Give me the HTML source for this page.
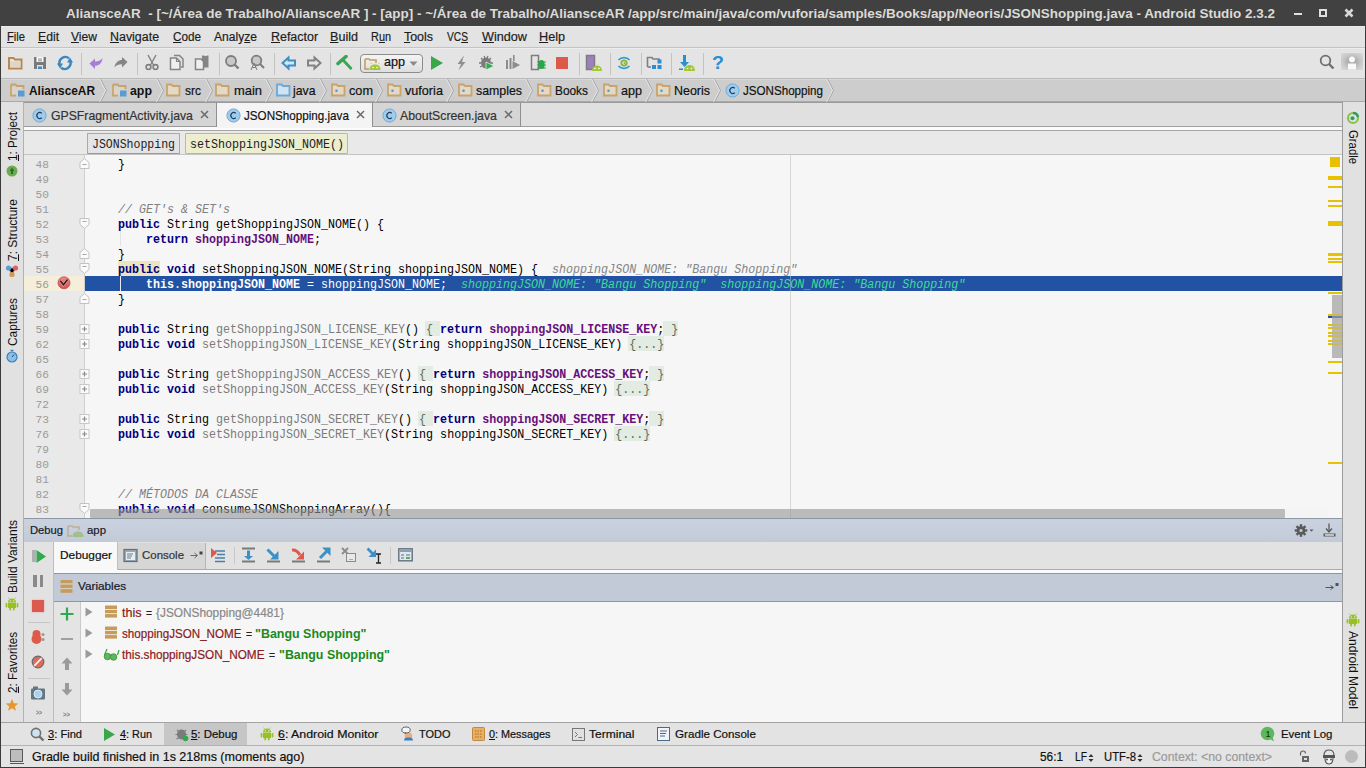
<!DOCTYPE html><html><head><meta charset="utf-8"><style>
html,body{margin:0;padding:0;width:1366px;height:768px;overflow:hidden;background:#e6e6e6}
body>div,body>svg{position:absolute;transform-origin:0 0;white-space:pre;margin:0;padding:0}
u{text-decoration:underline;text-underline-offset:1px}
.s{-webkit-text-stroke:0.2px currentColor}
</style></head><body>
<div style="left:0px;top:0px;width:1366px;height:26px;background:#414141;"></div>
<div style="left:0px;top:26px;width:1366px;height:21px;background:#e3e3e3;border-top:1px solid #ececec;box-sizing:border-box"></div>
<div style="left:0px;top:47px;width:1366px;height:1px;background:#c4c4c4;"></div>
<div style="left:0px;top:48px;width:1366px;height:30px;background:#e4e4e4;border-top:1px solid #ededed;box-sizing:border-box"></div>
<div style="left:0px;top:78px;width:1366px;height:1px;background:#b9b9b9;"></div>
<div style="left:0px;top:79px;width:1366px;height:23px;background:#cdcdcd;border-top:1px solid #d8d8d8;box-sizing:border-box"></div>
<div style="left:0px;top:101px;width:1366px;height:1px;background:#a9a9a9;"></div>
<div style="left:0px;top:102px;width:24px;height:620px;background:#e1e1e1;border-left:1px solid #505050;border-right:1px solid #b2b2b2;box-sizing:border-box"></div>
<div style="left:1342px;top:102px;width:24px;height:620px;background:#e1e1e1;border-left:1px solid #9c9c9c;border-right:1px solid #505050;box-sizing:border-box"></div>
<div style="left:24px;top:102px;width:1318px;height:25px;background:#e0e0e0;"></div>
<div style="left:24px;top:126px;width:1318px;height:1px;background:#9e9e9e;"></div>
<div style="left:24px;top:127px;width:1318px;height:3px;background:#fbfbfb;"></div>
<div style="left:24px;top:130px;width:1318px;height:1px;background:#a5a5a5;"></div>
<div style="left:24px;top:131px;width:1318px;height:23px;background:#e9e9e9;"></div>
<div style="left:24px;top:154px;width:1318px;height:1px;background:#c4c4c4;"></div>
<div style="left:24px;top:155px;width:1318px;height:363px;background:#f6f6f6;"></div>
<div style="left:24px;top:155px;width:61px;height:363px;background:#e9e9e9;"></div>
<div style="left:790px;top:155px;width:1px;height:363px;background:#d7d7d7;"></div>
<div style="left:24px;top:518px;width:1318px;height:25px;background:linear-gradient(#cbd2df,#c2cad8);border-top:1px solid #8f97a3;border-bottom:1px solid #8f97a3;box-sizing:border-box"></div>
<div style="left:24px;top:542px;width:30px;height:180px;background:#e2e2e2;border-right:1px solid #bdbdbd;box-sizing:border-box"></div>
<div style="left:54px;top:542px;width:1288px;height:28px;background:#e2e2e2;"></div>
<div style="left:54px;top:569px;width:1288px;height:1px;background:#b4a9a6;"></div>
<div style="left:54px;top:570px;width:1288px;height:3px;background:#fafafa;"></div>
<div style="left:54px;top:573px;width:1288px;height:29px;background:#c2cad8;border-top:1px solid #8e96a2;border-bottom:1px solid #8e96a2;box-sizing:border-box"></div>
<div style="left:54px;top:602px;width:27px;height:120px;background:#e4e4e4;border-right:1px solid #c9c9c9;box-sizing:border-box"></div>
<div style="left:81px;top:602px;width:1261px;height:120px;background:#f6f6f6;"></div>
<div style="left:0px;top:722px;width:1366px;height:24px;background:#e3e3e3;border-top:1px solid #a3a3a3;box-sizing:border-box"></div>
<div style="left:0px;top:745px;width:1366px;height:1px;background:#b2b2b2;"></div>
<div style="left:0px;top:746px;width:1366px;height:22px;background:#e4e4e4;border-bottom:1px solid #3b3b3b;border-left:1px solid #505050;box-sizing:border-box"></div>
<div style="left:81px;top:53px;width:1px;height:22px;background:#c2c2c2;"></div>
<div style="left:137px;top:53px;width:1px;height:22px;background:#c2c2c2;"></div>
<div style="left:219px;top:53px;width:1px;height:22px;background:#c2c2c2;"></div>
<div style="left:274px;top:53px;width:1px;height:22px;background:#c2c2c2;"></div>
<div style="left:330px;top:53px;width:1px;height:22px;background:#c2c2c2;"></div>
<div style="left:579px;top:53px;width:1px;height:22px;background:#c2c2c2;"></div>
<div style="left:641px;top:53px;width:1px;height:22px;background:#c2c2c2;"></div>
<div style="left:671px;top:53px;width:1px;height:22px;background:#c2c2c2;"></div>
<div style="left:703px;top:53px;width:1px;height:22px;background:#c2c2c2;"></div>
<svg style="left:7px;top:55px" width="16" height="16" viewBox="0 0 16 16"><path d="M2 3 H6.5 L8 4.5 H14.5 V13.5 H2 Z" fill="none" stroke="#b8884e" stroke-width="2"/><rect x="3" y="6.5" width="10.5" height="6" fill="#dcd6cc"/></svg>
<svg style="left:33px;top:55px" width="14" height="16" viewBox="0 0 14 16"><path d="M1 2 H13 V14 H1 Z" fill="#7a7a7a"/><rect x="3.5" y="2" width="7" height="5" fill="#fafafa"/><path d="M5 4H9M5 5.8H9" stroke="#7a7a7a" stroke-width="0.9"/><rect x="4" y="10" width="6" height="4" fill="#e0e0e0"/><rect x="5" y="11.5" width="4" height="2.5" fill="#3f8ac4"/></svg>
<svg style="left:57px;top:55px" width="16" height="16" viewBox="0 0 16 16"><path d="M12 3.2 A6 6 0 0 0 2.6 9.5" fill="none" stroke="#3b87c0" stroke-width="2.4"/><path d="M4 12.8 A6 6 0 0 0 13.4 6.5" fill="none" stroke="#3b87c0" stroke-width="2.4"/><path d="M0 8.5 H6 L3 13.5 Z" fill="#3b87c0"/><path d="M16 7.5 H10 L13 2.5 Z" fill="#3b87c0"/><path d="M8.5 0 V16" stroke="#e6e6e6" stroke-width="0"/></svg>
<svg style="left:88px;top:55px" width="16" height="16" viewBox="0 0 16 16"><path d="M1.5 8.5 L7 3.5 V6.5 C10.5 6.3 13.5 5 14.5 3 C14.2 8 11 10.8 7 10.8 V14 Z" fill="#a67fd4"/></svg>
<svg style="left:113px;top:55px" width="16" height="16" viewBox="0 0 16 16"><path d="M14.5 7 L9 2 V5 C5.5 5 2 7.5 1.5 12.5 C3 10 5.5 9.2 9 9.2 V12.5 Z" fill="#858585"/></svg>
<svg style="left:144px;top:54px" width="16" height="17" viewBox="0 0 16 17"><path d="M4 1 L9.5 11 M12 1 L6.5 11" stroke="#808080" stroke-width="1.4"/><circle cx="4.5" cy="13" r="2.4" fill="none" stroke="#808080" stroke-width="1.6"/><circle cx="11.5" cy="13" r="2.4" fill="none" stroke="#808080" stroke-width="1.6"/></svg>
<svg style="left:169px;top:54px" width="16" height="17" viewBox="0 0 16 17"><path d="M5 1.5 H10.5 L14 5 V13 H12" fill="none" stroke="#858585" stroke-width="1.5"/><path d="M1.5 4 H7.5 L11 7.5 V15.5 H1.5 Z" fill="#f0f0f0" stroke="#858585" stroke-width="1.5"/><path d="M7.5 4 V7.5 H11" fill="none" stroke="#858585" stroke-width="1.2"/></svg>
<svg style="left:194px;top:54px" width="16" height="17" viewBox="0 0 16 17"><rect x="8" y="1.5" width="6.5" height="12" fill="#858585"/><path d="M10 1 H13" stroke="#fafafa" stroke-width="1"/><path d="M1.5 5 H7 L9.5 7.5 V15.5 H1.5 Z" fill="#f0f0f0" stroke="#858585" stroke-width="1.5"/></svg>
<svg style="left:224px;top:54px" width="17" height="17" viewBox="0 0 17 17"><circle cx="7" cy="7" r="5" fill="#c8c8c8" stroke="#7d7d7d" stroke-width="1.8"/><path d="M10.5 10.5 L14.5 14.5" stroke="#7d7d7d" stroke-width="2.4"/></svg>
<svg style="left:249px;top:54px" width="17" height="17" viewBox="0 0 17 17"><circle cx="7.5" cy="6.5" r="4.8" fill="#c8c8c8" stroke="#7d7d7d" stroke-width="1.8"/><path d="M11 10 L15 14" stroke="#7d7d7d" stroke-width="2.2"/><path d="M2 16 L5 9 L8 16 M3.2 13.5H6.8" fill="none" stroke="#7d7d7d" stroke-width="1"/></svg>
<svg style="left:281px;top:55px" width="16" height="16" viewBox="0 0 16 16"><path d="M1.5 8 L7.5 2.5 V5.5 H14 V10.5 H7.5 V13.5 Z" fill="#d4e6f2" stroke="#3d8fc4" stroke-width="2"/></svg>
<svg style="left:306px;top:55px" width="16" height="16" viewBox="0 0 16 16"><path d="M14.5 8 L8.5 2.5 V5.5 H2 V10.5 H8.5 V13.5 Z" fill="#e6e6e6" stroke="#828282" stroke-width="2"/></svg>
<svg style="left:336px;top:55px" width="17" height="16" viewBox="0 0 17 16"><path d="M2 8.5 L10 1.5" stroke="#3aa655" stroke-width="3.6" stroke-linecap="round"/><path d="M7.5 5.5 L14.8 13.2" stroke="#3aa655" stroke-width="2.8" stroke-linecap="round"/></svg>
<div style="left:360px;top:54px;width:63px;height:19px;background:linear-gradient(#f4f4f4,#dedede);border:1px solid #8c8c8c;border-radius:4px;box-sizing:border-box"></div>
<svg style="left:364px;top:57px" width="18" height="14" viewBox="0 0 18 14"><path d="M1 2 H5 L6 3 H12 V6" fill="none" stroke="#c39a5c" stroke-width="1.5"/><path d="M1 2 V12 H5" fill="none" stroke="#c39a5c" stroke-width="1.5"/><path d="M5.5 13 C5.5 9 8 7.5 11 7.5 C14 7.5 16.5 9 16.5 13 Z" fill="#a4c639"/><circle cx="9" cy="10.5" r="0.8" fill="#fff"/><circle cx="13" cy="10.5" r="0.8" fill="#fff"/><path d="M7.5 7 L6.8 6 M14.5 7 L15.2 6" stroke="#a4c639" stroke-width="0.8"/></svg>
<div class="s" style="left:384.00px;top:55.20px;font:13.00px/14.60px 'Liberation Sans';color:#111;transform:scaleX(0.9677);">app</div>
<svg style="left:409px;top:61px" width="9" height="6" viewBox="0 0 9 6"><path d="M0.5 0.5 H8.5 L4.5 5 Z" fill="#8a8a8a"/></svg>
<svg style="left:430px;top:55px" width="14" height="16" viewBox="0 0 14 16"><path d="M1 1 L13 8 L1 15 Z" fill="#3aa84a"/></svg>
<svg style="left:455px;top:55px" width="12" height="16" viewBox="0 0 12 16"><path d="M9 0.5 L2.5 9 H6 L3.5 15.5 L10.5 7 H7 Z" fill="#8f8f8f"/></svg>
<svg style="left:478px;top:54px" width="18" height="17" viewBox="0 0 18 17"><ellipse cx="8" cy="9" rx="5" ry="5.5" fill="#7b7b7b"/><path d="M3 4 L5 6 M13 4 L11 6 M1 9 H3 M13 9 H15 M2 13 L4 12 M14 13 L12 12 M6 2 L7 4 M10 2 L9 4" stroke="#7b7b7b" stroke-width="1.3"/><path d="M8 8 L16 12 L8 16 Z" fill="#2cae4a" stroke="#e6e6e6" stroke-width="0.8"/></svg>
<svg style="left:505px;top:54px" width="16" height="17" viewBox="0 0 16 17"><rect x="1" y="6" width="2" height="9" fill="#8c8c8c"/><rect x="4.5" y="4" width="2" height="11" fill="#8c8c8c"/><rect x="8" y="1" width="1.6" height="6" fill="#8c8c8c"/><path d="M7.5 7 L15 11 L7.5 15 Z" fill="#8c8c8c"/></svg>
<svg style="left:530px;top:54px" width="16" height="17" viewBox="0 0 16 17"><rect x="1.5" y="1.5" width="7" height="14" fill="none" stroke="#7d7d7d" stroke-width="1.5"/><ellipse cx="11.5" cy="10.5" rx="3.2" ry="4.5" fill="#2aa64a"/><path d="M7 8 H16 M7 11 H16 M7 14 H16" stroke="#2aa64a" stroke-width="1"/></svg>
<div style="left:556px;top:57px;width:12px;height:12px;background:#dd5a4a;"></div>
<svg style="left:585px;top:54px" width="17" height="18" viewBox="0 0 17 18"><rect x="1.5" y="1.5" width="8" height="14" fill="#9e7fc0" stroke="#7d7d7d" stroke-width="1.5"/><path d="M7 17 C7 13 9.5 11.5 12 11.5 C14.5 11.5 17 13 17 17 Z" fill="#a4c639"/><circle cx="10" cy="14.5" r="0.8" fill="#fff"/><circle cx="14" cy="14.5" r="0.8" fill="#fff"/></svg>
<svg style="left:616px;top:55px" width="16" height="16" viewBox="0 0 16 16"><path d="M2.5 5 A7 6 0 0 1 13.5 5 M2.5 11 A7 6 0 0 0 13.5 11" fill="none" stroke="#2a9fd6" stroke-width="1.8"/><circle cx="8" cy="8" r="3.6" fill="#8bb33a"/><circle cx="8" cy="8" r="1.8" fill="#e6e6e6"/><circle cx="8.5" cy="8" r="1" fill="#8bb33a"/></svg>
<svg style="left:646px;top:55px" width="18" height="16" viewBox="0 0 18 16"><path d="M1.5 12 V2.5 H6 L7 4 H13 V6" fill="none" stroke="#7f7f7f" stroke-width="1.6"/><path d="M1.5 12 H5" stroke="#7f7f7f" stroke-width="1.6"/><rect x="6" y="10" width="4" height="4" fill="#2a8fd0"/><rect x="11.5" y="10" width="4" height="4" fill="#2a8fd0"/><rect x="11.5" y="4.5" width="4" height="4" fill="#2a8fd0"/></svg>
<svg style="left:678px;top:54px" width="18" height="17" viewBox="0 0 18 17"><rect x="5" y="1" width="3" height="8" fill="#2a8fd0"/><path d="M2 8 H11 L6.5 13 Z" fill="#2a8fd0"/><rect x="1" y="14.5" width="4" height="1.5" fill="#2a8fd0"/><path d="M6 17 C6 13 8.5 11 11.5 11 C14.5 11 17 13 17 17 Z" fill="#a4c639"/><circle cx="9.5" cy="14.5" r="0.8" fill="#fff"/><circle cx="13.5" cy="14.5" r="0.8" fill="#fff"/></svg>
<div style="left:712.00px;top:52.70px;font:bold 18.00px/20.20px 'Liberation Sans';color:#2a8fd0;transform:scaleX(1.0909);">?</div>
<svg style="left:1319px;top:54px" width="17" height="17" viewBox="0 0 17 17"><circle cx="6.5" cy="6.5" r="4.8" fill="none" stroke="#6f6f6f" stroke-width="1.8"/><path d="M10 10 L14.5 14.5" stroke="#6f6f6f" stroke-width="2.4"/></svg>
<div style="left:1341px;top:53px;width:22px;height:17px;background:radial-gradient(ellipse at center,#9a9a9a 0%,#c9c9c9 60%,#dcdcdc 100%);"></div>
<svg style="left:1346px;top:55px" width="12" height="15" viewBox="0 0 12 15"><circle cx="6" cy="4.5" r="3" fill="#fafafa"/><rect x="2" y="8.5" width="8" height="6" fill="#fafafa"/></svg>
<div style="left:610px;top:53px;width:1px;height:22px;background:#c2c2c2;"></div>
<svg style="left:10px;top:83px" width="16" height="14" viewBox="0 0 16 14"><path d="M1 1.5 H5.5 L7 3 H13.5 V6 M1 1.5 V12.5 H6" fill="none" stroke="#c9a46a" stroke-width="1.8"/><rect x="1.8" y="4" width="10.5" height="7.5" fill="#e2d7c3" opacity="0.6"/><rect x="8" y="7.5" width="6.5" height="6" fill="#5b9bd1"/></svg>
<svg style="left:99px;top:79px" width="9" height="23" viewBox="0 0 9 23"><path d="M1.5 0 L7.5 11.5 L1.5 23" fill="none" stroke="#a3a3a3" stroke-width="1"/><path d="M0.5 0 L6.5 11.5 L0.5 23" fill="none" stroke="#ececec" stroke-width="0.8"/></svg>
<svg style="left:112px;top:83px" width="16" height="14" viewBox="0 0 16 14"><path d="M1 1.5 H5.5 L7 3 H13.5 V6 M1 1.5 V12.5 H6" fill="none" stroke="#c9a46a" stroke-width="1.8"/><rect x="1.8" y="4" width="10.5" height="7.5" fill="#e2d7c3" opacity="0.6"/><rect x="8" y="7.5" width="6.5" height="6" fill="#5b9bd1"/></svg>
<svg style="left:156px;top:79px" width="9" height="23" viewBox="0 0 9 23"><path d="M1.5 0 L7.5 11.5 L1.5 23" fill="none" stroke="#a3a3a3" stroke-width="1"/><path d="M0.5 0 L6.5 11.5 L0.5 23" fill="none" stroke="#ececec" stroke-width="0.8"/></svg>
<svg style="left:166px;top:83px" width="15" height="14" viewBox="0 0 15 14"><path d="M1 1.5 H5.5 L7 3 H13.5 V12.5 H1 Z" fill="#e3d9c6" stroke="#c9a46a" stroke-width="1.8"/></svg>
<svg style="left:205px;top:79px" width="9" height="23" viewBox="0 0 9 23"><path d="M1.5 0 L7.5 11.5 L1.5 23" fill="none" stroke="#a3a3a3" stroke-width="1"/><path d="M0.5 0 L6.5 11.5 L0.5 23" fill="none" stroke="#ececec" stroke-width="0.8"/></svg>
<svg style="left:215px;top:83px" width="15" height="14" viewBox="0 0 15 14"><path d="M1 1.5 H5.5 L7 3 H13.5 V12.5 H1 Z" fill="#e3d9c6" stroke="#c9a46a" stroke-width="1.8"/></svg>
<svg style="left:265px;top:79px" width="9" height="23" viewBox="0 0 9 23"><path d="M1.5 0 L7.5 11.5 L1.5 23" fill="none" stroke="#a3a3a3" stroke-width="1"/><path d="M0.5 0 L6.5 11.5 L0.5 23" fill="none" stroke="#ececec" stroke-width="0.8"/></svg>
<svg style="left:276px;top:83px" width="15" height="14" viewBox="0 0 15 14"><path d="M1 1.5 H5.5 L7 3 H13.5 V12.5 H1 Z" fill="#cfe3f2" stroke="#6aa9d8" stroke-width="1.8"/></svg>
<svg style="left:319px;top:79px" width="9" height="23" viewBox="0 0 9 23"><path d="M1.5 0 L7.5 11.5 L1.5 23" fill="none" stroke="#a3a3a3" stroke-width="1"/><path d="M0.5 0 L6.5 11.5 L0.5 23" fill="none" stroke="#ececec" stroke-width="0.8"/></svg>
<svg style="left:331px;top:83px" width="15" height="14" viewBox="0 0 15 14"><path d="M1 1.5 H5.5 L7 3 H13.5 V12.5 H1 Z" fill="#e3d9c6" stroke="#c9a46a" stroke-width="1.8"/><circle cx="5.5" cy="7.8" r="1.3" fill="#4e9ad0"/></svg>
<svg style="left:375px;top:79px" width="9" height="23" viewBox="0 0 9 23"><path d="M1.5 0 L7.5 11.5 L1.5 23" fill="none" stroke="#a3a3a3" stroke-width="1"/><path d="M0.5 0 L6.5 11.5 L0.5 23" fill="none" stroke="#ececec" stroke-width="0.8"/></svg>
<svg style="left:387px;top:83px" width="15" height="14" viewBox="0 0 15 14"><path d="M1 1.5 H5.5 L7 3 H13.5 V12.5 H1 Z" fill="#e3d9c6" stroke="#c9a46a" stroke-width="1.8"/><circle cx="5.5" cy="7.8" r="1.3" fill="#4e9ad0"/></svg>
<svg style="left:446px;top:79px" width="9" height="23" viewBox="0 0 9 23"><path d="M1.5 0 L7.5 11.5 L1.5 23" fill="none" stroke="#a3a3a3" stroke-width="1"/><path d="M0.5 0 L6.5 11.5 L0.5 23" fill="none" stroke="#ececec" stroke-width="0.8"/></svg>
<svg style="left:458px;top:83px" width="15" height="14" viewBox="0 0 15 14"><path d="M1 1.5 H5.5 L7 3 H13.5 V12.5 H1 Z" fill="#e3d9c6" stroke="#c9a46a" stroke-width="1.8"/><circle cx="5.5" cy="7.8" r="1.3" fill="#4e9ad0"/></svg>
<svg style="left:525px;top:79px" width="9" height="23" viewBox="0 0 9 23"><path d="M1.5 0 L7.5 11.5 L1.5 23" fill="none" stroke="#a3a3a3" stroke-width="1"/><path d="M0.5 0 L6.5 11.5 L0.5 23" fill="none" stroke="#ececec" stroke-width="0.8"/></svg>
<svg style="left:537px;top:83px" width="15" height="14" viewBox="0 0 15 14"><path d="M1 1.5 H5.5 L7 3 H13.5 V12.5 H1 Z" fill="#e3d9c6" stroke="#c9a46a" stroke-width="1.8"/><circle cx="5.5" cy="7.8" r="1.3" fill="#4e9ad0"/></svg>
<svg style="left:591px;top:79px" width="9" height="23" viewBox="0 0 9 23"><path d="M1.5 0 L7.5 11.5 L1.5 23" fill="none" stroke="#a3a3a3" stroke-width="1"/><path d="M0.5 0 L6.5 11.5 L0.5 23" fill="none" stroke="#ececec" stroke-width="0.8"/></svg>
<svg style="left:603px;top:83px" width="15" height="14" viewBox="0 0 15 14"><path d="M1 1.5 H5.5 L7 3 H13.5 V12.5 H1 Z" fill="#e3d9c6" stroke="#c9a46a" stroke-width="1.8"/><circle cx="5.5" cy="7.8" r="1.3" fill="#4e9ad0"/></svg>
<svg style="left:645px;top:79px" width="9" height="23" viewBox="0 0 9 23"><path d="M1.5 0 L7.5 11.5 L1.5 23" fill="none" stroke="#a3a3a3" stroke-width="1"/><path d="M0.5 0 L6.5 11.5 L0.5 23" fill="none" stroke="#ececec" stroke-width="0.8"/></svg>
<svg style="left:656px;top:83px" width="15" height="14" viewBox="0 0 15 14"><path d="M1 1.5 H5.5 L7 3 H13.5 V12.5 H1 Z" fill="#e3d9c6" stroke="#c9a46a" stroke-width="1.8"/><circle cx="5.5" cy="7.8" r="1.3" fill="#4e9ad0"/></svg>
<svg style="left:713px;top:79px" width="9" height="23" viewBox="0 0 9 23"><path d="M1.5 0 L7.5 11.5 L1.5 23" fill="none" stroke="#a3a3a3" stroke-width="1"/><path d="M0.5 0 L6.5 11.5 L0.5 23" fill="none" stroke="#ececec" stroke-width="0.8"/></svg>
<svg style="left:725px;top:83px" width="15" height="15" viewBox="0 0 15 15"><circle cx="7.5" cy="7.5" r="6.6" fill="#9fcbed" stroke="#6aaede" stroke-width="1"/><path d="M9.8 5.2 A3 3 0 1 0 9.8 9.8" fill="none" stroke="#1f3f60" stroke-width="1.2"/></svg>
<svg style="left:826px;top:79px" width="9" height="23" viewBox="0 0 9 23"><path d="M1.5 0 L7.5 11.5 L1.5 23" fill="none" stroke="#a3a3a3" stroke-width="1"/><path d="M0.5 0 L6.5 11.5 L0.5 23" fill="none" stroke="#ececec" stroke-width="0.8"/></svg>
<div style="left:24px;top:102px;width:193px;height:25px;background:#d5d5d5;border-right:1px solid #8e8e8e;border-bottom:1px solid #9a9a9a;box-sizing:border-box"></div>
<div style="left:217px;top:102px;width:155px;height:26px;background:#f4f4f4;"></div>
<div style="left:372px;top:102px;width:149px;height:25px;background:#d5d5d5;border-left:1px solid #8e8e8e;border-right:1px solid #8e8e8e;border-bottom:1px solid #9a9a9a;box-sizing:border-box"></div>
<div style="left:24px;top:102px;width:1318px;height:1px;background:#9a9a9a;"></div>
<svg style="left:32px;top:108px" width="15" height="15" viewBox="0 0 15 15"><circle cx="7.5" cy="7.5" r="6.6" fill="#9fcbed" stroke="#6aaede" stroke-width="1"/><path d="M9.8 5.2 A3 3 0 1 0 9.8 9.8" fill="none" stroke="#1f3f60" stroke-width="1.2"/></svg>
<svg style="left:226px;top:108px" width="15" height="15" viewBox="0 0 15 15"><circle cx="7.5" cy="7.5" r="6.6" fill="#9fcbed" stroke="#6aaede" stroke-width="1"/><path d="M9.8 5.2 A3 3 0 1 0 9.8 9.8" fill="none" stroke="#1f3f60" stroke-width="1.2"/></svg>
<svg style="left:382px;top:108px" width="15" height="15" viewBox="0 0 15 15"><circle cx="7.5" cy="7.5" r="6.6" fill="#9fcbed" stroke="#6aaede" stroke-width="1"/><path d="M9.8 5.2 A3 3 0 1 0 9.8 9.8" fill="none" stroke="#1f3f60" stroke-width="1.2"/></svg>
<svg style="left:200px;top:110px" width="9" height="9" viewBox="0 0 9 9"><path d="M1 1 L8 8 M8 1 L1 8" stroke="#6a6a6a" stroke-width="1.5"/></svg>
<svg style="left:356px;top:110px" width="9" height="9" viewBox="0 0 9 9"><path d="M1 1 L8 8 M8 1 L1 8" stroke="#6a6a6a" stroke-width="1.5"/></svg>
<svg style="left:504px;top:110px" width="9" height="9" viewBox="0 0 9 9"><path d="M1 1 L8 8 M8 1 L1 8" stroke="#6a6a6a" stroke-width="1.5"/></svg>
<div style="left:87px;top:133px;width:93px;height:21px;background:#e4e4e4;border:1px solid #a9a9a9;border-bottom-color:#9a9a9a;box-sizing:border-box;border-radius:1px"></div>
<div style="left:185px;top:133px;width:163px;height:21px;background:#ededd0;border:1px solid #b9b9a0;box-sizing:border-box;border-radius:1px"></div>
<div style="left:66.00px;top:6.60px;font:bold 12.50px/14.10px 'Liberation Sans';color:#dcdad5;transform:scaleX(1.0761);">AliansceAR  - [~/Área de Trabalho/AliansceAR ] - [app] - ~/Área de Trabalho/AliansceAR /app/src/main/java/com/vuforia/samples/Books/app/Neoris/JSONShopping.java - Android Studio 2.3.2</div>
<div style="left:1294px;top:13px;width:8px;height:2px;background:#e0e0e0;"></div>
<div style="left:1319px;top:9px;width:8px;height:8px;border:2px solid #e0e0e0;box-sizing:border-box"></div>
<svg style="left:1344px;top:8px" width="10" height="10" viewBox="0 0 10 10"><path d="M1.5 1.5L8.5 8.5M8.5 1.5L1.5 8.5" stroke="#d8d8d8" stroke-width="2.6"/></svg>
<div class="s" style="left:7.00px;top:29.60px;font:12.50px/14.10px 'Liberation Sans';color:#1d1d1d;transform:scaleX(0.8955);"><u>F</u>ile</div>
<div class="s" style="left:38.00px;top:29.60px;font:12.50px/14.10px 'Liberation Sans';color:#1d1d1d;transform:scaleX(0.9767);"><u>E</u>dit</div>
<div class="s" style="left:71.00px;top:29.60px;font:12.50px/14.10px 'Liberation Sans';color:#1d1d1d;transform:scaleX(0.9665);"><u>V</u>iew</div>
<div class="s" style="left:110.00px;top:29.60px;font:12.50px/14.10px 'Liberation Sans';color:#1d1d1d;transform:scaleX(0.9939);"><u>N</u>avigate</div>
<div class="s" style="left:173.00px;top:29.60px;font:12.50px/14.10px 'Liberation Sans';color:#1d1d1d;transform:scaleX(0.9365);"><u>C</u>ode</div>
<div class="s" style="left:214.00px;top:29.60px;font:12.50px/14.10px 'Liberation Sans';color:#1d1d1d;transform:scaleX(0.9663);">Analy<u>z</u>e</div>
<div class="s" style="left:271.00px;top:29.60px;font:12.50px/14.10px 'Liberation Sans';color:#1d1d1d;transform:scaleX(0.9958);"><u>R</u>efactor</div>
<div class="s" style="left:330.00px;top:29.60px;font:12.50px/14.10px 'Liberation Sans';color:#1d1d1d;transform:scaleX(1.0072);"><u>B</u>uild</div>
<div class="s" style="left:371.00px;top:29.60px;font:12.50px/14.10px 'Liberation Sans';color:#1d1d1d;transform:scaleX(0.8734);">R<u>u</u>n</div>
<div class="s" style="left:404.00px;top:29.60px;font:12.50px/14.10px 'Liberation Sans';color:#1d1d1d;transform:scaleX(0.9932);"><u>T</u>ools</div>
<div class="s" style="left:447.00px;top:29.60px;font:12.50px/14.10px 'Liberation Sans';color:#1d1d1d;transform:scaleX(0.8171);">VC<u>S</u></div>
<div class="s" style="left:482.00px;top:29.60px;font:12.50px/14.10px 'Liberation Sans';color:#1d1d1d;transform:scaleX(1.0112);"><u>W</u>indow</div>
<div class="s" style="left:539.00px;top:29.60px;font:12.50px/14.10px 'Liberation Sans';color:#1d1d1d;transform:scaleX(1.0117);"><u>H</u>elp</div>
<div style="left:29.00px;top:83.90px;font:bold 12.80px/14.40px 'Liberation Sans';color:#111;transform:scaleX(0.9283);">AliansceAR</div>
<div style="left:130.00px;top:83.90px;font:bold 12.80px/14.40px 'Liberation Sans';color:#111;transform:scaleX(0.9649);">app</div>
<div class="s" style="left:185.00px;top:83.90px;font:12.80px/14.40px 'Liberation Sans';color:#111;transform:scaleX(0.9357);">src</div>
<div class="s" style="left:234.00px;top:83.90px;font:12.80px/14.40px 'Liberation Sans';color:#111;transform:scaleX(1.0108);">main</div>
<div class="s" style="left:293.38px;top:83.90px;font:12.80px/14.40px 'Liberation Sans';color:#111;transform:scaleX(0.9583);">java</div>
<div class="s" style="left:349.00px;top:83.90px;font:12.80px/14.40px 'Liberation Sans';color:#111;transform:scaleX(0.9917);">com</div>
<div class="s" style="left:405.00px;top:83.90px;font:12.80px/14.40px 'Liberation Sans';color:#111;transform:scaleX(0.9870);">vuforia</div>
<div class="s" style="left:476.00px;top:83.90px;font:12.80px/14.40px 'Liberation Sans';color:#111;transform:scaleX(0.9644);">samples</div>
<div class="s" style="left:555.00px;top:83.90px;font:12.80px/14.40px 'Liberation Sans';color:#111;transform:scaleX(0.9270);">Books</div>
<div class="s" style="left:621.00px;top:83.90px;font:12.80px/14.40px 'Liberation Sans';color:#111;transform:scaleX(0.9813);">app</div>
<div class="s" style="left:674.00px;top:83.90px;font:12.80px/14.40px 'Liberation Sans';color:#111;transform:scaleX(0.9730);">Neoris</div>
<div class="s" style="left:743.00px;top:83.90px;font:12.80px/14.40px 'Liberation Sans';color:#111;transform:scaleX(0.9070);">JSONShopping</div>
<div class="s" style="left:51.00px;top:109.40px;font:12.80px/14.40px 'Liberation Sans';color:#333;transform:scaleX(0.9562);">GPSFragmentActivity.java</div>
<div class="s" style="left:244.00px;top:109.40px;font:12.80px/14.40px 'Liberation Sans';color:#111;transform:scaleX(0.9099);">JSONShopping.java</div>
<div class="s" style="left:400.00px;top:109.40px;font:12.80px/14.40px 'Liberation Sans';color:#333;transform:scaleX(0.9594);">AboutScreen.java</div>
<div style="left:91.50px;top:137.50px;font:12.50px/14.30px 'Liberation Mono';color:#222;transform:scaleX(0.9222);">JSONShopping</div>
<div style="left:190.00px;top:137.50px;font:12.50px/14.30px 'Liberation Mono';color:#222;transform:scaleX(0.9333);">setShoppingJSON_NOME()</div>
<div style="left:85px;top:276px;width:1257px;height:15px;background:#2252a3;"></div>
<div style="left:24px;top:276px;width:61px;height:15px;background:#f5eedb;"></div>
<div style="left:790px;top:276px;width:1px;height:15px;background:#6f8fc6;"></div>
<div style="left:118.0px;top:261px;width:42px;height:15px;background:#ede3bd;"></div>
<div style="left:425.0px;top:321px;width:15.0px;height:15px;background:#e2ece2;"></div>
<div style="left:663.0px;top:321px;width:15.0px;height:15px;background:#e2ece2;"></div>
<div style="left:628.0px;top:336px;width:36.0px;height:15px;background:#e2ece2;"></div>
<div style="left:418.0px;top:366px;width:15.0px;height:15px;background:#e2ece2;"></div>
<div style="left:649.0px;top:366px;width:15.0px;height:15px;background:#e2ece2;"></div>
<div style="left:614.0px;top:381px;width:36.0px;height:15px;background:#e2ece2;"></div>
<div style="left:418.0px;top:411px;width:15.0px;height:15px;background:#e2ece2;"></div>
<div style="left:649.0px;top:411px;width:15.0px;height:15px;background:#e2ece2;"></div>
<div style="left:614.0px;top:426px;width:36.0px;height:15px;background:#e2ece2;"></div>
<div style="left:90px;top:157.50px;font:12.5px/14.30px 'Liberation Mono';color:#000;transform:scaleX(0.93333)">    }</div>
<div style="left:90px;top:202.50px;font:12.5px/14.30px 'Liberation Mono';color:#000;transform:scaleX(0.93333)"><span style="color:#808080;font-style:italic">    // GET&#x27;s &amp; SET&#x27;s</span></div>
<div style="left:90px;top:217.50px;font:12.5px/14.30px 'Liberation Mono';color:#000;transform:scaleX(0.93333)">    <span style="color:#000080;font-weight:bold">public</span> String getShoppingJSON_NOME() {</div>
<div style="left:90px;top:232.50px;font:12.5px/14.30px 'Liberation Mono';color:#000;transform:scaleX(0.93333)">        <span style="color:#000080;font-weight:bold">return</span> <span style="color:#660e7a;font-weight:bold">shoppingJSON_NOME</span>;</div>
<div style="left:90px;top:247.50px;font:12.5px/14.30px 'Liberation Mono';color:#000;transform:scaleX(0.93333)">    }</div>
<div style="left:90px;top:262.50px;font:12.5px/14.30px 'Liberation Mono';color:#000;transform:scaleX(0.93333)">    <span style="color:#000080;font-weight:bold">public</span> <span style="color:#000080;font-weight:bold">void</span> setShoppingJSON_NOME(String shoppingJSON_NOME) {  <span style="color:#858585;font-style:italic">shoppingJSON_NOME: &quot;Bangu Shopping&quot;</span></div>
<div style="left:90px;top:292.50px;font:12.5px/14.30px 'Liberation Mono';color:#000;transform:scaleX(0.93333)">    }</div>
<div style="left:90px;top:322.50px;font:12.5px/14.30px 'Liberation Mono';color:#000;transform:scaleX(0.93333)">    <span style="color:#000080;font-weight:bold">public</span> String <span style="color:#7b7b7b">getShoppingJSON_LICENSE_KEY</span>() <span style="color:#5f6a5f">{ </span><span style="color:#000080;font-weight:bold">return</span> <span style="color:#660e7a;font-weight:bold">shoppingJSON_LICENSE_KEY</span>;<span style="color:#5f6a5f"> }</span></div>
<div style="left:90px;top:337.50px;font:12.5px/14.30px 'Liberation Mono';color:#000;transform:scaleX(0.93333)">    <span style="color:#000080;font-weight:bold">public</span> <span style="color:#000080;font-weight:bold">void</span> <span style="color:#7b7b7b">setShoppingJSON_LICENSE_KEY</span>(String shoppingJSON_LICENSE_KEY) <span style="color:#5f6a5f">{...}</span></div>
<div style="left:90px;top:367.50px;font:12.5px/14.30px 'Liberation Mono';color:#000;transform:scaleX(0.93333)">    <span style="color:#000080;font-weight:bold">public</span> String <span style="color:#7b7b7b">getShoppingJSON_ACCESS_KEY</span>() <span style="color:#5f6a5f">{ </span><span style="color:#000080;font-weight:bold">return</span> <span style="color:#660e7a;font-weight:bold">shoppingJSON_ACCESS_KEY</span>;<span style="color:#5f6a5f"> }</span></div>
<div style="left:90px;top:382.50px;font:12.5px/14.30px 'Liberation Mono';color:#000;transform:scaleX(0.93333)">    <span style="color:#000080;font-weight:bold">public</span> <span style="color:#000080;font-weight:bold">void</span> <span style="color:#7b7b7b">setShoppingJSON_ACCESS_KEY</span>(String shoppingJSON_ACCESS_KEY) <span style="color:#5f6a5f">{...}</span></div>
<div style="left:90px;top:412.50px;font:12.5px/14.30px 'Liberation Mono';color:#000;transform:scaleX(0.93333)">    <span style="color:#000080;font-weight:bold">public</span> String <span style="color:#7b7b7b">getShoppingJSON_SECRET_KEY</span>() <span style="color:#5f6a5f">{ </span><span style="color:#000080;font-weight:bold">return</span> <span style="color:#660e7a;font-weight:bold">shoppingJSON_SECRET_KEY</span>;<span style="color:#5f6a5f"> }</span></div>
<div style="left:90px;top:427.50px;font:12.5px/14.30px 'Liberation Mono';color:#000;transform:scaleX(0.93333)">    <span style="color:#000080;font-weight:bold">public</span> <span style="color:#000080;font-weight:bold">void</span> <span style="color:#7b7b7b">setShoppingJSON_SECRET_KEY</span>(String shoppingJSON_SECRET_KEY) <span style="color:#5f6a5f">{...}</span></div>
<div style="left:90px;top:487.50px;font:12.5px/14.30px 'Liberation Mono';color:#000;transform:scaleX(0.93333)"><span style="color:#808080;font-style:italic">    // MÉTODOS DA CLASSE</span></div>
<div style="left:90px;top:502.50px;font:12.5px/14.30px 'Liberation Mono';color:#000;transform:scaleX(0.93333)">    <span style="color:#000080;font-weight:bold">public</span> <span style="color:#000080;font-weight:bold">void</span> consumeJSONShoppingArray(){</div>
<div style="left:90px;top:277.50px;font:12.5px/14.30px 'Liberation Mono';color:#ffffff;transform:scaleX(0.93333)">        <span style="font-weight:bold">this</span>.<span style="font-weight:bold">shoppingJSON_NOME</span> = shoppingJSON_NOME;  <span style="color:#3ddc97;font-style:italic">shoppingJSON_NOME: &quot;Bangu Shopping&quot;</span>  <span style="color:#3ddc97;font-style:italic">shoppingJSON_NOME: &quot;Bangu Shopping&quot;</span></div>
<div style="left:35.60px;top:158.90px;font:11.20px/12.80px 'Liberation Mono';color:#9a9a9a;transform:scaleX(1.0000);">48</div>
<div style="left:35.60px;top:173.90px;font:11.20px/12.80px 'Liberation Mono';color:#9a9a9a;transform:scaleX(1.0000);">49</div>
<div style="left:35.60px;top:188.90px;font:11.20px/12.80px 'Liberation Mono';color:#9a9a9a;transform:scaleX(1.0000);">50</div>
<div style="left:35.60px;top:203.90px;font:11.20px/12.80px 'Liberation Mono';color:#9a9a9a;transform:scaleX(1.0000);">51</div>
<div style="left:35.60px;top:218.90px;font:11.20px/12.80px 'Liberation Mono';color:#9a9a9a;transform:scaleX(1.0000);">52</div>
<div style="left:35.60px;top:233.90px;font:11.20px/12.80px 'Liberation Mono';color:#9a9a9a;transform:scaleX(1.0000);">53</div>
<div style="left:35.60px;top:248.90px;font:11.20px/12.80px 'Liberation Mono';color:#9a9a9a;transform:scaleX(1.0000);">54</div>
<div style="left:35.60px;top:263.90px;font:11.20px/12.80px 'Liberation Mono';color:#9a9a9a;transform:scaleX(1.0000);">55</div>
<div style="left:35.60px;top:278.90px;font:11.20px/12.80px 'Liberation Mono';color:#9a9a9a;transform:scaleX(1.0000);">56</div>
<div style="left:35.60px;top:293.90px;font:11.20px/12.80px 'Liberation Mono';color:#9a9a9a;transform:scaleX(1.0000);">57</div>
<div style="left:35.60px;top:308.90px;font:11.20px/12.80px 'Liberation Mono';color:#9a9a9a;transform:scaleX(1.0000);">58</div>
<div style="left:35.60px;top:323.90px;font:11.20px/12.80px 'Liberation Mono';color:#9a9a9a;transform:scaleX(1.0000);">59</div>
<div style="left:35.60px;top:338.90px;font:11.20px/12.80px 'Liberation Mono';color:#9a9a9a;transform:scaleX(1.0000);">62</div>
<div style="left:35.60px;top:353.90px;font:11.20px/12.80px 'Liberation Mono';color:#9a9a9a;transform:scaleX(1.0000);">65</div>
<div style="left:35.60px;top:368.90px;font:11.20px/12.80px 'Liberation Mono';color:#9a9a9a;transform:scaleX(1.0000);">66</div>
<div style="left:35.60px;top:383.90px;font:11.20px/12.80px 'Liberation Mono';color:#9a9a9a;transform:scaleX(1.0000);">69</div>
<div style="left:35.60px;top:398.90px;font:11.20px/12.80px 'Liberation Mono';color:#9a9a9a;transform:scaleX(1.0000);">72</div>
<div style="left:35.60px;top:413.90px;font:11.20px/12.80px 'Liberation Mono';color:#9a9a9a;transform:scaleX(1.0000);">73</div>
<div style="left:35.60px;top:428.90px;font:11.20px/12.80px 'Liberation Mono';color:#9a9a9a;transform:scaleX(1.0000);">76</div>
<div style="left:35.60px;top:443.90px;font:11.20px/12.80px 'Liberation Mono';color:#9a9a9a;transform:scaleX(1.0000);">79</div>
<div style="left:35.60px;top:458.90px;font:11.20px/12.80px 'Liberation Mono';color:#9a9a9a;transform:scaleX(1.0000);">80</div>
<div style="left:35.60px;top:473.90px;font:11.20px/12.80px 'Liberation Mono';color:#9a9a9a;transform:scaleX(1.0000);">81</div>
<div style="left:35.60px;top:488.90px;font:11.20px/12.80px 'Liberation Mono';color:#9a9a9a;transform:scaleX(1.0000);">82</div>
<div style="left:35.60px;top:503.90px;font:11.20px/12.80px 'Liberation Mono';color:#9a9a9a;transform:scaleX(1.0000);">83</div>
<div style="left:84px;top:155px;width:1px;height:363px;background:#cfcfcf;"></div>
<svg style="left:79px;top:158px" width="11" height="11" viewBox="0 0 11 11"><path d="M5.5 0.5 L10 4.5 V10.5 H1 V4.5 Z" fill="#fafafa" stroke="#c3c3c3" stroke-width="1"/><path d="M3.5 6.5H7.5" stroke="#a8a8a8" stroke-width="1"/></svg>
<svg style="left:79px;top:248px" width="11" height="11" viewBox="0 0 11 11"><path d="M5.5 0.5 L10 4.5 V10.5 H1 V4.5 Z" fill="#fafafa" stroke="#c3c3c3" stroke-width="1"/><path d="M3.5 6.5H7.5" stroke="#a8a8a8" stroke-width="1"/></svg>
<svg style="left:79px;top:293px" width="11" height="11" viewBox="0 0 11 11"><path d="M5.5 0.5 L10 4.5 V10.5 H1 V4.5 Z" fill="#fafafa" stroke="#c3c3c3" stroke-width="1"/><path d="M3.5 6.5H7.5" stroke="#a8a8a8" stroke-width="1"/></svg>
<svg style="left:79px;top:218px" width="11" height="11" viewBox="0 0 11 11"><path d="M1 0.5 H10 V6.5 L5.5 10.5 L1 6.5 Z" fill="#fafafa" stroke="#c3c3c3" stroke-width="1"/><path d="M3.5 3.5H7.5" stroke="#a8a8a8" stroke-width="1"/></svg>
<svg style="left:79px;top:263px" width="11" height="11" viewBox="0 0 11 11"><path d="M1 0.5 H10 V6.5 L5.5 10.5 L1 6.5 Z" fill="#fafafa" stroke="#c3c3c3" stroke-width="1"/><path d="M3.5 3.5H7.5" stroke="#a8a8a8" stroke-width="1"/></svg>
<svg style="left:79px;top:503px" width="11" height="11" viewBox="0 0 11 11"><path d="M1 0.5 H10 V6.5 L5.5 10.5 L1 6.5 Z" fill="#fafafa" stroke="#c3c3c3" stroke-width="1"/><path d="M3.5 3.5H7.5" stroke="#a8a8a8" stroke-width="1"/></svg>
<svg style="left:79px;top:324px" width="11" height="10" viewBox="0 0 11 10"><rect x="1" y="0.5" width="9" height="9" fill="#fafafa" stroke="#c8c8c8"/><path d="M3 5H8M5.5 2.5V7.5" stroke="#8a8a8a" stroke-width="1.2"/></svg>
<svg style="left:79px;top:339px" width="11" height="10" viewBox="0 0 11 10"><rect x="1" y="0.5" width="9" height="9" fill="#fafafa" stroke="#c8c8c8"/><path d="M3 5H8M5.5 2.5V7.5" stroke="#8a8a8a" stroke-width="1.2"/></svg>
<svg style="left:79px;top:369px" width="11" height="10" viewBox="0 0 11 10"><rect x="1" y="0.5" width="9" height="9" fill="#fafafa" stroke="#c8c8c8"/><path d="M3 5H8M5.5 2.5V7.5" stroke="#8a8a8a" stroke-width="1.2"/></svg>
<svg style="left:79px;top:384px" width="11" height="10" viewBox="0 0 11 10"><rect x="1" y="0.5" width="9" height="9" fill="#fafafa" stroke="#c8c8c8"/><path d="M3 5H8M5.5 2.5V7.5" stroke="#8a8a8a" stroke-width="1.2"/></svg>
<svg style="left:79px;top:414px" width="11" height="10" viewBox="0 0 11 10"><rect x="1" y="0.5" width="9" height="9" fill="#fafafa" stroke="#c8c8c8"/><path d="M3 5H8M5.5 2.5V7.5" stroke="#8a8a8a" stroke-width="1.2"/></svg>
<svg style="left:79px;top:429px" width="11" height="10" viewBox="0 0 11 10"><rect x="1" y="0.5" width="9" height="9" fill="#fafafa" stroke="#c8c8c8"/><path d="M3 5H8M5.5 2.5V7.5" stroke="#8a8a8a" stroke-width="1.2"/></svg>
<svg style="left:57px;top:276px" width="14" height="14" viewBox="0 0 14 14"><defs><linearGradient id="bpg" x1="0" y1="0" x2="0" y2="1"><stop offset="0" stop-color="#f08a8a"/><stop offset="1" stop-color="#cf5252"/></linearGradient></defs><circle cx="7" cy="6.8" r="6" fill="url(#bpg)" stroke="#c04a4a" stroke-width="0.8"/><path d="M3.3 4.8 L6.5 8.8 L10.6 3.5" fill="none" stroke="#f8d0d0" stroke-width="2.6" opacity="0.6"/><path d="M3.3 4.8 L6.5 8.8 L10.6 3.5" fill="none" stroke="#3a1a1a" stroke-width="1.6"/></svg>
<div style="left:120px;top:231px;width:1px;height:15px;background:#e3e3e3;"></div>
<div style="left:120px;top:276px;width:1px;height:15px;background:#e8e8f0;"></div>
<div style="left:5.60px;top:161.00px;font:12.50px/14.10px 'Liberation Sans';color:#111;transform:rotate(-90deg) scaleX(0.9280)"><u>1</u>: Project</div>
<div style="left:5.60px;top:261.00px;font:12.50px/14.10px 'Liberation Sans';color:#111;transform:rotate(-90deg) scaleX(0.9598)"><u>7</u>: Structure</div>
<div style="left:5.60px;top:346.00px;font:12.50px/14.10px 'Liberation Sans';color:#111;transform:rotate(-90deg) scaleX(0.9467)">Captures</div>
<div style="left:5.60px;top:593.00px;font:12.50px/14.10px 'Liberation Sans';color:#111;transform:rotate(-90deg) scaleX(0.9580)">Build Variants</div>
<div style="left:5.60px;top:693.00px;font:12.50px/14.10px 'Liberation Sans';color:#111;transform:rotate(-90deg) scaleX(0.9342)"><u>2</u>: Favorites</div>
<div style="left:1360.40px;top:130.00px;font:12.50px/14.10px 'Liberation Sans';color:#111;transform:rotate(90deg) scaleX(0.9067)">Gradle</div>
<div style="left:1360.40px;top:631.00px;font:12.50px/14.10px 'Liberation Sans';color:#111;transform:rotate(90deg) scaleX(0.9677)">Android Model</div>
<svg style="left:6px;top:165px" width="12" height="12" viewBox="0 0 12 12"><circle cx="6" cy="6" r="5.5" fill="#6bab4f"/><path d="M6 2.5 L8.5 6 H7 V9 H5 V6 H3.5 Z" fill="#2f6d2a"/></svg>
<svg style="left:5px;top:264px" width="14" height="14" viewBox="0 0 14 14"><path d="M3.5 4 L7 11 L10.5 4" stroke="#888" stroke-width="1"/><path d="M3.5 4 H10.5" stroke="#888" stroke-width="1"/><circle cx="3.5" cy="4" r="2.6" fill="#5a9fd6"/><circle cx="10.5" cy="4" r="2.6" fill="#e06060"/><circle cx="7" cy="10.5" r="2.6" fill="#d49a50"/></svg>
<svg style="left:6px;top:349px" width="12" height="14" viewBox="0 0 12 14"><circle cx="6" cy="8" r="5" fill="#8cc0e8" stroke="#3b7fb8" stroke-width="1.2"/><path d="M6 8 L8 5.5" stroke="#1f4f80" stroke-width="1"/><path d="M4.5 1.5 H7.5" stroke="#3b7fb8" stroke-width="1.4"/></svg>
<svg style="left:5px;top:597px" width="15" height="15" viewBox="0 0 15 15"><g transform="scale(1.0)"><path d="M3 6 H11 V11 H3 Z" fill="#97c024"/><path d="M3 5.5 C3 2.5 5 1.5 7 1.5 C9 1.5 11 2.5 11 5.5 Z" fill="#97c024"/><rect x="0.6" y="6" width="1.8" height="4.5" rx="0.9" fill="#97c024"/><rect x="11.6" y="6" width="1.8" height="4.5" rx="0.9" fill="#97c024"/><rect x="4.3" y="10" width="1.8" height="3.5" rx="0.9" fill="#97c024"/><rect x="7.9" y="10" width="1.8" height="3.5" rx="0.9" fill="#97c024"/><circle cx="5.3" cy="3.8" r="0.6" fill="#fff"/><circle cx="8.7" cy="3.8" r="0.6" fill="#fff"/><path d="M4.5 2 L3.5 0.5 M9.5 2 L10.5 0.5" stroke="#97c024" stroke-width="0.7"/></g></svg>
<svg style="left:5px;top:698px" width="14" height="15" viewBox="0 0 14 15"><path d="M7 1 L8.8 5.2 L13.3 5.5 L9.8 8.4 L11 12.8 L7 10.3 L3 12.8 L4.2 8.4 L0.7 5.5 L5.2 5.2 Z" fill="#e8962e"/></svg>
<svg style="left:1346px;top:111px" width="14" height="14" viewBox="0 0 14 14"><circle cx="7" cy="7" r="5" fill="none" stroke="#8bc34a" stroke-width="2.2"/><path d="M7 2 A5 5 0 0 1 12 6" fill="none" stroke="#2e9e5e" stroke-width="2.4"/><circle cx="6.5" cy="7.3" r="2" fill="#2e9e5e"/></svg>
<svg style="left:1346px;top:613px" width="15" height="15" viewBox="0 0 15 15"><g transform="scale(1.0)"><path d="M3 6 H11 V11 H3 Z" fill="#97c024"/><path d="M3 5.5 C3 2.5 5 1.5 7 1.5 C9 1.5 11 2.5 11 5.5 Z" fill="#97c024"/><rect x="0.6" y="6" width="1.8" height="4.5" rx="0.9" fill="#97c024"/><rect x="11.6" y="6" width="1.8" height="4.5" rx="0.9" fill="#97c024"/><rect x="4.3" y="10" width="1.8" height="3.5" rx="0.9" fill="#97c024"/><rect x="7.9" y="10" width="1.8" height="3.5" rx="0.9" fill="#97c024"/><circle cx="5.3" cy="3.8" r="0.6" fill="#fff"/><circle cx="8.7" cy="3.8" r="0.6" fill="#fff"/><path d="M4.5 2 L3.5 0.5 M9.5 2 L10.5 0.5" stroke="#97c024" stroke-width="0.7"/></g></svg>
<div class="s" style="left:30.00px;top:524.20px;font:10.80px/12.10px 'Liberation Sans';color:#1a1a2a;transform:scaleX(1.0377);">Debug</div>
<svg style="left:67px;top:524px" width="17" height="14" viewBox="0 0 17 14"><g opacity="0.45"><path d="M1 2 H5 L6 3 H12 V6 M1 2 V12 H5" fill="none" stroke="#b08a50" stroke-width="1.5"/><path d="M5.5 13 C5.5 9 8 7.5 11 7.5 C14 7.5 16.5 9 16.5 13 Z" fill="#7ab02a"/></g></svg>
<div class="s" style="left:87.00px;top:524.20px;font:10.80px/12.10px 'Liberation Sans';color:#1a1a2a;transform:scaleX(1.0556);">app</div>
<svg style="left:1294px;top:523px" width="20" height="15" viewBox="0 0 20 15"><g transform="translate(7,7.5)"><circle r="4.2" fill="#5a5a5a"/><g fill="#5a5a5a"><rect x="-1.2" y="-6.3" width="2.4" height="12.6"/><rect x="-6.3" y="-1.2" width="12.6" height="2.4"/><rect x="-1.2" y="-6.3" width="2.4" height="12.6" transform="rotate(45)"/><rect x="-1.2" y="-6.3" width="2.4" height="12.6" transform="rotate(-45)"/></g><circle r="1.6" fill="#c5ccda"/></g><path d="M15.5 6.5 H19.5 L17.5 8.8 Z" fill="#5a5a5a"/></svg>
<svg style="left:1323px;top:523px" width="13" height="15" viewBox="0 0 13 15"><path d="M6 0.5 V8" stroke="#5a5a5a" stroke-width="1.3"/><path d="M3 5.5 L6 9 L9 5.5" fill="none" stroke="#5a5a5a" stroke-width="1.3"/><rect x="0.5" y="10.5" width="12" height="3" fill="#5a5a5a"/><rect x="2" y="11.3" width="9" height="1.4" fill="#e8e8e8"/></svg>
<svg style="left:31px;top:549px" width="16" height="15" viewBox="0 0 16 15"><path d="M5.5 1 L15 7.5 L5.5 14 Z" fill="#2fa84f"/><path d="M1 2 H5 M1 4 H5 M1 6 H5 M1 8 H5 M1 10 H5 M1 12 H5" stroke="#666" stroke-width="0.8"/></svg>
<div style="left:33px;top:575px;width:3.5px;height:12px;background:#8a8a8a;"></div>
<div style="left:39.5px;top:575px;width:3.5px;height:12px;background:#8a8a8a;"></div>
<div style="left:32px;top:600px;width:12px;height:12px;background:#db5a4f;box-shadow:0 0 2px #f0a0a0"></div>
<div style="left:28px;top:622px;width:22px;height:1px;background:#c6c6c6;"></div>
<svg style="left:30px;top:629px" width="16" height="16" viewBox="0 0 16 16"><circle cx="6.5" cy="5" r="4" fill="#e05a4a"/><circle cx="6.5" cy="10" r="5" fill="#e05a4a"/><circle cx="13" cy="5.5" r="1.6" fill="#9a9a9a"/><circle cx="13" cy="10.5" r="1.6" fill="#9a9a9a"/></svg>
<svg style="left:31px;top:655px" width="14" height="14" viewBox="0 0 14 14"><circle cx="7" cy="7" r="5.8" fill="#e06a5a" stroke="#6a6a6a" stroke-width="1.2"/><path d="M3.2 10.8 L10.8 3.2" stroke="#f2f2f2" stroke-width="1.8"/></svg>
<div style="left:28px;top:678px;width:22px;height:1px;background:#c6c6c6;"></div>
<svg style="left:30px;top:685px" width="16" height="15" viewBox="0 0 16 15"><rect x="1" y="3.5" width="14" height="11" rx="1" fill="#617785"/><rect x="3" y="1.5" width="5" height="3" fill="#617785"/><circle cx="8" cy="9" r="4" fill="#a8d4f2" stroke="#e8e8e8" stroke-width="1"/></svg>
<div class="s" style="left:36.00px;top:707.70px;font:8.00px/9.00px 'Liberation Sans';color:#777;transform:scaleX(0.6452);">&gt;&gt;</div>
<div style="left:54px;top:542px;width:64px;height:28px;background:#f8f8f8;border-right:1px solid #c0c0c0;box-sizing:border-box"></div>
<div style="left:118px;top:543px;width:88px;height:26px;background:#d6d6d6;border-right:1px solid #b5b5b5;box-sizing:border-box"></div>
<div class="s" style="left:60.00px;top:549.20px;font:10.80px/12.10px 'Liberation Sans';color:#111;transform:scaleX(1.0970);">Debugger</div>
<svg style="left:123px;top:548px" width="15" height="15" viewBox="0 0 15 15"><rect x="1" y="1.5" width="13" height="12" fill="#9aa9b5" stroke="#5f6f7a" stroke-width="1.2"/><rect x="3" y="4" width="9" height="8" fill="#e8eef2"/><path d="M4 6 H10 M4 8 H9 M4 10 H8" stroke="#5f6f7a" stroke-width="0.9"/></svg>
<div class="s" style="left:142.00px;top:549.20px;font:10.80px/12.10px 'Liberation Sans';color:#333;transform:scaleX(1.0606);">Console</div>
<svg style="left:190px;top:550px" width="13" height="10" viewBox="0 0 13 10"><path d="M0.5 5.5 H7 M4.5 3 L7.5 5.5 L4.5 8" fill="none" stroke="#6a6a6a" stroke-width="1"/><rect x="9.5" y="1.5" width="3" height="3" fill="#444"/></svg>
<svg style="left:210px;top:547px" width="16" height="16" viewBox="0 0 16 16"><path d="M1 1 L7 6 L1 11 Z" fill="#e0584a"/><path d="M5 4 H15 M7 7.5 H15 M5 11 H15 M5 14.5 H15" stroke="#4a7fa8" stroke-width="1.7"/></svg>
<div style="left:234px;top:547px;width:1px;height:17px;background:#c8c8c8;"></div>
<svg style="left:241px;top:547px" width="16" height="16" viewBox="0 0 16 16"><rect x="1" y="0.5" width="13" height="2" fill="#7a7a7a"/><path d="M6 3.5 V9 H3 L7.5 13 L12 9 H9 V3.5 Z" fill="#3a90c8"/><rect x="1" y="13.5" width="13" height="2" fill="#7a7a7a"/></svg>
<svg style="left:266px;top:547px" width="16" height="16" viewBox="0 0 16 16"><path d="M1.5 2.5 L8 9" stroke="#3a90c8" stroke-width="3"/><path d="M12.5 4 V12.5 H4 Z" fill="#3a90c8"/><rect x="1" y="13.5" width="13" height="2" fill="#7a7a7a"/></svg>
<svg style="left:291px;top:547px" width="16" height="16" viewBox="0 0 16 16"><path d="M1 3 C5 2.5 7 4.5 9 8" fill="none" stroke="#e0584a" stroke-width="3"/><path d="M13 4.5 V12.5 H5 Z" fill="#e0584a"/><rect x="1" y="13.5" width="13" height="2" fill="#7a7a7a"/></svg>
<svg style="left:316px;top:547px" width="16" height="16" viewBox="0 0 16 16"><path d="M4 11 L10.5 4.5" stroke="#3a90c8" stroke-width="3"/><path d="M14.5 0.5 V9 L6 0.5 Z" fill="#3a90c8"/><rect x="1" y="13.5" width="13" height="2" fill="#7a7a7a"/></svg>
<svg style="left:341px;top:547px" width="16" height="16" viewBox="0 0 16 16"><path d="M1 1 L7 7 M7 1 L1 7" stroke="#8a8a8a" stroke-width="1.8"/><rect x="5.5" y="6.5" width="9" height="8" fill="#e8e8e8" stroke="#8a8a8a" stroke-width="1"/><path d="M8 12.5 H12" stroke="#aaa" stroke-width="1"/></svg>
<svg style="left:366px;top:547px" width="16" height="17" viewBox="0 0 16 17"><path d="M1.5 1.5 L7 7" stroke="#3a90c8" stroke-width="2.6"/><path d="M10 2.5 V10 H2.5 Z" fill="#3a90c8"/><path d="M10 7 H15 M12.5 7 V16 M10 16 H15" stroke="#222" stroke-width="1.3"/></svg>
<div style="left:390px;top:547px;width:1px;height:17px;background:#c8c8c8;"></div>
<svg style="left:398px;top:547px" width="15" height="16" viewBox="0 0 15 16"><rect x="0.8" y="1.8" width="13.4" height="12" fill="#dfe6ec" stroke="#607080" stroke-width="1.4"/><rect x="1.5" y="2.5" width="12" height="2.5" fill="#8aa0b0"/><path d="M3 8 H6 M8 8 H12 M3 11 H6 M8 11 H12" stroke="#607080" stroke-width="1.2"/><path d="M8 11 H12" stroke="#2fa84f" stroke-width="1.2"/></svg>
<svg style="left:60px;top:579px" width="13" height="15" viewBox="0 0 13 15"><rect x="0.5" y="1" width="12" height="3.6" fill="#c79b5a"/><rect x="0.5" y="5.6" width="12" height="3.6" fill="#c79b5a"/><rect x="0.5" y="10.2" width="12" height="3.6" fill="#c79b5a"/><path d="M0.5 4.8 H12.5 M0.5 9.4 H12.5" stroke="#e8d8b0" stroke-width="0.6"/></svg>
<div class="s" style="left:78.00px;top:580.20px;font:10.80px/12.10px 'Liberation Sans';color:#1a1a2a;transform:scaleX(1.0860);">Variables</div>
<svg style="left:1325px;top:582px" width="14" height="10" viewBox="0 0 14 10"><path d="M0.5 5.5 H8 M5.5 3.5 L8.5 5.5 L5.5 7.5" fill="none" stroke="#555" stroke-width="1"/><rect x="10.5" y="1" width="3" height="3" fill="#4a5260"/></svg>
<svg style="left:60px;top:607px" width="14" height="14" viewBox="0 0 14 14"><path d="M7 0.5 V13.5 M0.5 7 H13.5" stroke="#2fa84f" stroke-width="2.2"/></svg>
<div style="left:61px;top:638px;width:12px;height:2px;background:#a0a0a0;"></div>
<svg style="left:61px;top:657px" width="12" height="14" viewBox="0 0 12 14"><path d="M6 0.5 L11.5 6.5 H8 V13 H4 V6.5 H0.5 Z" fill="#9a9a9a"/></svg>
<svg style="left:61px;top:682px" width="12" height="14" viewBox="0 0 12 14"><path d="M6 13.5 L11.5 7.5 H8 V1 H4 V7.5 H0.5 Z" fill="#9a9a9a"/></svg>
<div class="s" style="left:63.00px;top:709.70px;font:8.00px/9.00px 'Liberation Sans';color:#777;transform:scaleX(0.7527);">&gt;&gt;</div>
<svg style="left:85px;top:607px" width="8" height="10" viewBox="0 0 8 10"><path d="M0.5 0.5 L7.5 5 L0.5 9.5 Z" fill="#9a9a9a"/></svg>
<svg style="left:85px;top:628px" width="8" height="10" viewBox="0 0 8 10"><path d="M0.5 0.5 L7.5 5 L0.5 9.5 Z" fill="#9a9a9a"/></svg>
<svg style="left:85px;top:649px" width="8" height="10" viewBox="0 0 8 10"><path d="M0.5 0.5 L7.5 5 L0.5 9.5 Z" fill="#9a9a9a"/></svg>
<svg style="left:105px;top:605px" width="13" height="13" viewBox="0 0 13 13"><rect x="0" y="0.5" width="12" height="3.5" fill="#c79b5a"/><rect x="0" y="4.8" width="12" height="3.5" fill="#c79b5a"/><rect x="0" y="9.1" width="12" height="3.5" fill="#c79b5a"/></svg>
<svg style="left:105px;top:626px" width="13" height="13" viewBox="0 0 13 13"><rect x="0" y="0.5" width="12" height="3.5" fill="#c79b5a"/><rect x="0" y="4.8" width="12" height="3.5" fill="#c79b5a"/><rect x="0" y="9.1" width="12" height="3.5" fill="#c79b5a"/></svg>
<svg style="left:103px;top:647px" width="17" height="14" viewBox="0 0 17 14"><circle cx="4.5" cy="9.5" r="3.3" fill="#5cb85c" stroke="#3f8f3f" stroke-width="0.8"/><circle cx="10.5" cy="10" r="3.3" fill="#5cb85c" stroke="#3f8f3f" stroke-width="0.8"/><path d="M7.7 8.5 C8 7.5 8.5 7.5 8.3 8.5 M1.5 8 L4 2 M14.5 8 L16 3" fill="none" stroke="#3f9f3f" stroke-width="1.2"/></svg>
<div class="s" style="left:122.00px;top:606.60px;font:12.30px/13.90px 'Liberation Sans';color:#8a1a1a;transform:scaleX(1.0209);">this</div>
<div class="s" style="left:145.50px;top:606.60px;font:12.30px/13.90px 'Liberation Sans';color:#222;transform:scaleX(0.8333);">=</div>
<div class="s" style="left:155.50px;top:606.60px;font:12.30px/13.90px 'Liberation Sans';color:#888;transform:scaleX(0.9631);">{JSONShopping@4481}</div>
<div class="s" style="left:122.00px;top:627.60px;font:12.30px/13.90px 'Liberation Sans';color:#8a1a1a;transform:scaleX(0.9447);">shoppingJSON_NOME</div>
<div class="s" style="left:245.50px;top:627.60px;font:12.30px/13.90px 'Liberation Sans';color:#222;transform:scaleX(0.8333);">=</div>
<div style="left:255.00px;top:627.60px;font:bold 12.30px/13.90px 'Liberation Sans';color:#1a8a1a;transform:scaleX(1.0127);">&quot;Bangu Shopping&quot;</div>
<div class="s" style="left:122.00px;top:648.60px;font:12.30px/13.90px 'Liberation Sans';color:#8a1a1a;transform:scaleX(0.9564);">this.shoppingJSON_NOME</div>
<div class="s" style="left:269.00px;top:648.60px;font:12.30px/13.90px 'Liberation Sans';color:#222;transform:scaleX(0.8333);">=</div>
<div style="left:278.50px;top:648.60px;font:bold 12.30px/13.90px 'Liberation Sans';color:#1a8a1a;transform:scaleX(1.0082);">&quot;Bangu Shopping&quot;</div>
<div style="left:1285px;top:508px;width:43px;height:10px;background:#f4f4f4;"></div>
<div style="left:90px;top:509px;width:1195px;height:9px;background:rgba(150,150,150,0.62);border-radius:1px"></div>
<div style="left:1330px;top:157px;width:10px;height:10px;background:#e8c000;"></div>
<div style="left:1328px;top:176px;width:14px;height:4px;background:#e6c200;"></div>
<div style="left:1328px;top:186px;width:14px;height:2px;background:#e6c200;"></div>
<div style="left:1328px;top:200px;width:14px;height:2px;background:#e6c200;"></div>
<div style="left:1328px;top:205px;width:14px;height:2px;background:#e6c200;"></div>
<div style="left:1328px;top:221px;width:14px;height:5px;background:#e6c200;"></div>
<div style="left:1328px;top:253px;width:14px;height:3px;background:#e6c200;"></div>
<div style="left:1328px;top:258px;width:14px;height:2px;background:#e6c200;"></div>
<div style="left:1328px;top:261px;width:14px;height:2px;background:#e6c200;"></div>
<div style="left:1328px;top:292px;width:14px;height:2px;background:#e6c200;"></div>
<div style="left:1328px;top:361px;width:14px;height:2px;background:#e6c200;"></div>
<div style="left:1328px;top:372px;width:14px;height:2px;background:#e6c200;"></div>
<div style="left:1328px;top:462px;width:14px;height:2px;background:#e6c200;"></div>
<div style="left:1328px;top:276px;width:14px;height:15px;background:#2252a3;"></div>
<div style="left:1332px;top:295px;width:10px;height:63px;background:#b9b9b9;"></div>
<div style="left:1328px;top:314px;width:4px;height:2px;background:#e6c200;"></div>
<div style="left:1332px;top:314px;width:10px;height:2px;background:#c8b860;"></div>
<div style="left:1328px;top:324px;width:4px;height:2px;background:#e6c200;"></div>
<div style="left:1332px;top:324px;width:10px;height:2px;background:#c8b860;"></div>
<div style="left:1328px;top:327px;width:4px;height:2px;background:#e6c200;"></div>
<div style="left:1332px;top:327px;width:10px;height:2px;background:#c8b860;"></div>
<div style="left:1328px;top:332px;width:4px;height:2px;background:#e6c200;"></div>
<div style="left:1332px;top:332px;width:10px;height:2px;background:#c8b860;"></div>
<div style="left:1328px;top:335px;width:4px;height:2px;background:#e6c200;"></div>
<div style="left:1332px;top:335px;width:10px;height:2px;background:#c8b860;"></div>
<div style="left:1328px;top:340px;width:4px;height:2px;background:#e6c200;"></div>
<div style="left:1332px;top:340px;width:10px;height:2px;background:#c8b860;"></div>
<div style="left:1328px;top:343px;width:4px;height:2px;background:#e6c200;"></div>
<div style="left:1332px;top:343px;width:10px;height:2px;background:#c8b860;"></div>
<div style="left:1328px;top:316px;width:4px;height:2px;background:#2a4f9a;"></div>
<div style="left:1332px;top:316px;width:10px;height:2px;background:#7a8aa8;"></div>
<div style="left:164px;top:723px;width:83px;height:22px;background:#c6c6c6;"></div>
<svg style="left:30px;top:727px" width="15" height="15" viewBox="0 0 15 15"><circle cx="6" cy="6" r="4.6" fill="#cde3f2" stroke="#6f6f6f" stroke-width="1.6"/><path d="M9.3 9.3 L13.5 13.5" stroke="#6f6f6f" stroke-width="2.4"/></svg>
<div class="s" style="left:48.00px;top:728.00px;font:11.20px/12.60px 'Liberation Sans';color:#111;transform:scaleX(0.9942);"><u>3</u>: Find</div>
<svg style="left:103px;top:727px" width="13" height="15" viewBox="0 0 13 15"><path d="M1 1 L12 7.5 L1 14 Z" fill="#3aa84a"/></svg>
<div class="s" style="left:120.00px;top:728.00px;font:11.20px/12.60px 'Liberation Sans';color:#111;transform:scaleX(0.9697);"><u>4</u>: Run</div>
<svg style="left:175px;top:727px" width="14" height="15" viewBox="0 0 14 15"><ellipse cx="6.5" cy="7.5" rx="4.5" ry="5" fill="#7b7b7b"/><path d="M2 3 L4 5 M11 3 L9 5 M0.5 7.5 H2.5 M10.5 7.5 H12.5 M1.5 12 L3.5 11 M11.5 12 L9.5 11" stroke="#7b7b7b" stroke-width="1.2"/><circle cx="10.5" cy="11.5" r="2.8" fill="#2fa84f"/></svg>
<div class="s" style="left:191.00px;top:728.00px;font:11.20px/12.60px 'Liberation Sans';color:#111;transform:scaleX(1.0220);"><u>5</u>: Debug</div>
<svg style="left:260px;top:727px" width="15" height="15" viewBox="0 0 15 15"><g transform="scale(1.0)"><path d="M3 6 H11 V11 H3 Z" fill="#97c024"/><path d="M3 5.5 C3 2.5 5 1.5 7 1.5 C9 1.5 11 2.5 11 5.5 Z" fill="#97c024"/><rect x="0.6" y="6" width="1.8" height="4.5" rx="0.9" fill="#97c024"/><rect x="11.6" y="6" width="1.8" height="4.5" rx="0.9" fill="#97c024"/><rect x="4.3" y="10" width="1.8" height="3.5" rx="0.9" fill="#97c024"/><rect x="7.9" y="10" width="1.8" height="3.5" rx="0.9" fill="#97c024"/><circle cx="5.3" cy="3.8" r="0.6" fill="#fff"/><circle cx="8.7" cy="3.8" r="0.6" fill="#fff"/><path d="M4.5 2 L3.5 0.5 M9.5 2 L10.5 0.5" stroke="#97c024" stroke-width="0.7"/></g></svg>
<div class="s" style="left:278.00px;top:728.00px;font:11.20px/12.60px 'Liberation Sans';color:#111;transform:scaleX(1.1056);"><u>6</u>: Android Monitor</div>
<svg style="left:401px;top:726px" width="16" height="16" viewBox="0 0 16 16"><circle cx="7.5" cy="10" r="3.8" fill="#e8b080"/><path d="M3 14.5 C3 12 5 11.5 7.5 11.5 C10 11.5 12 12 12 14.5 Z" fill="#3a7fc0"/><ellipse cx="5" cy="4" rx="4.2" ry="3" fill="#f4f4f4" stroke="#555" stroke-width="0.9"/><path d="M5 6 L4 8" stroke="#555" stroke-width="0.8"/></svg>
<div class="s" style="left:419.00px;top:728.00px;font:11.20px/12.60px 'Liberation Sans';color:#111;transform:scaleX(0.9783);">TODO</div>
<svg style="left:472px;top:727px" width="13" height="14" viewBox="0 0 13 14"><rect x="0.5" y="0.5" width="12" height="13" rx="1" fill="#e8b060" stroke="#c08840" stroke-width="1"/><path d="M3 4 H10 M3 7 H10 M3 10 H10" stroke="#a06a30" stroke-width="1" stroke-dasharray="1.5 1"/></svg>
<div class="s" style="left:489.00px;top:728.00px;font:11.20px/12.60px 'Liberation Sans';color:#111;transform:scaleX(0.9685);"><u>0</u>: Messages</div>
<svg style="left:572px;top:728px" width="13" height="13" viewBox="0 0 13 13"><rect x="0.5" y="0.5" width="12" height="12" fill="#e0e0e0" stroke="#777" stroke-width="1"/><path d="M3 4 L5.5 6.5 L3 9 M6.5 9.5 H10" fill="none" stroke="#777" stroke-width="1"/></svg>
<div class="s" style="left:589.00px;top:728.00px;font:11.20px/12.60px 'Liberation Sans';color:#111;transform:scaleX(1.0757);">Terminal</div>
<svg style="left:657px;top:727px" width="13" height="14" viewBox="0 0 13 14"><rect x="0.5" y="0.5" width="12" height="13" fill="#f0f4f8" stroke="#4a6a8a" stroke-width="1"/><path d="M3 4 H10 M3 6.5 H9 M3 9 H8" stroke="#4a6a8a" stroke-width="1"/></svg>
<div class="s" style="left:674.50px;top:728.00px;font:11.20px/12.60px 'Liberation Sans';color:#111;transform:scaleX(1.0411);">Gradle Console</div>
<svg style="left:1260px;top:726px" width="17" height="16" viewBox="0 0 17 16"><circle cx="7.5" cy="7.5" r="6.8" fill="#5cb85c"/><path d="M10 13 L14 15.5 L12.5 11 Z" fill="#5cb85c"/></svg>
<div style="left:1266.00px;top:730.30px;font:bold 8.50px/9.60px 'Liberation Sans';color:#1a3a1a;transform:scaleX(0.8511);">1</div>
<div class="s" style="left:1281.00px;top:728.00px;font:11.20px/12.60px 'Liberation Sans';color:#111;transform:scaleX(1.0218);">Event Log</div>
<div style="left:10px;top:749px;width:13px;height:13px;background:#bdbdbd;border:1px solid #5a5a5a;box-sizing:border-box"></div>
<div style="left:10px;top:763px;width:14px;height:1px;background:#555;"></div>
<div style="left:0px;top:722px;width:1px;height:46px;background:#3b3b3b;"></div>
<div class="s" style="left:32.00px;top:750.40px;font:12.80px/14.40px 'Liberation Sans';color:#111;transform:scaleX(0.9771);">Gradle build finished in 1s 218ms (moments ago)</div>
<div class="s" style="left:1040.00px;top:750.40px;font:12.80px/14.40px 'Liberation Sans';color:#111;transform:scaleX(0.9237);">56:1</div>
<div class="s" style="left:1075.00px;top:750.40px;font:12.80px/14.40px 'Liberation Sans';color:#111;transform:scaleX(0.8054);">LF</div>
<svg style="left:1088px;top:753px" width="6" height="10" viewBox="0 0 6 10"><path d="M0.5 4 L3 1 L5.5 4 Z M0.5 6 L3 9 L5.5 6 Z" fill="#333"/></svg>
<div class="s" style="left:1104.00px;top:750.40px;font:12.80px/14.40px 'Liberation Sans';color:#111;transform:scaleX(0.8815);">UTF-8</div>
<svg style="left:1137px;top:753px" width="6" height="10" viewBox="0 0 6 10"><path d="M0.5 4 L3 1 L5.5 4 Z M0.5 6 L3 9 L5.5 6 Z" fill="#333"/></svg>
<div class="s" style="left:1152.00px;top:750.40px;font:12.80px/14.40px 'Liberation Sans';color:#9a9a9a;transform:scaleX(0.9585);">Context: &lt;no context&gt;</div>
<svg style="left:1298px;top:750px" width="12" height="13" viewBox="0 0 12 13"><path d="M2.5 5.5 V3.5 A2.5 2.5 0 0 1 7.5 3.5" fill="none" stroke="#666" stroke-width="1.2"/><rect x="4" y="6" width="7" height="6" fill="#666"/><rect x="6" y="8" width="3" height="2" fill="#ddd"/></svg>
<svg style="left:1322px;top:749px" width="14" height="16" viewBox="0 0 14 16"><path d="M2 7 C2 2 4 1 7 1 C10 1 12 2 12 7 Z" fill="#e4e4e4" stroke="#555" stroke-width="1.1"/><rect x="1" y="6" width="12" height="3" fill="#555"/><path d="M3 9 C3 13 5 15 7 15 C9 15 11 13 11 9" fill="#f4f4f4" stroke="#555" stroke-width="1.1"/><circle cx="5" cy="10.5" r="1" fill="#555"/><circle cx="9" cy="10.5" r="1" fill="#555"/></svg>
<svg style="left:1344px;top:749px" width="15" height="15" viewBox="0 0 15 15"><circle cx="7.5" cy="7.5" r="6.5" fill="#bcbcbc"/></svg>
<div style="left:0px;top:26px;width:1px;height:742px;background:#3b3b3b;"></div>
<div style="left:1365px;top:26px;width:1px;height:742px;background:#3b3b3b;"></div>
</body></html>
